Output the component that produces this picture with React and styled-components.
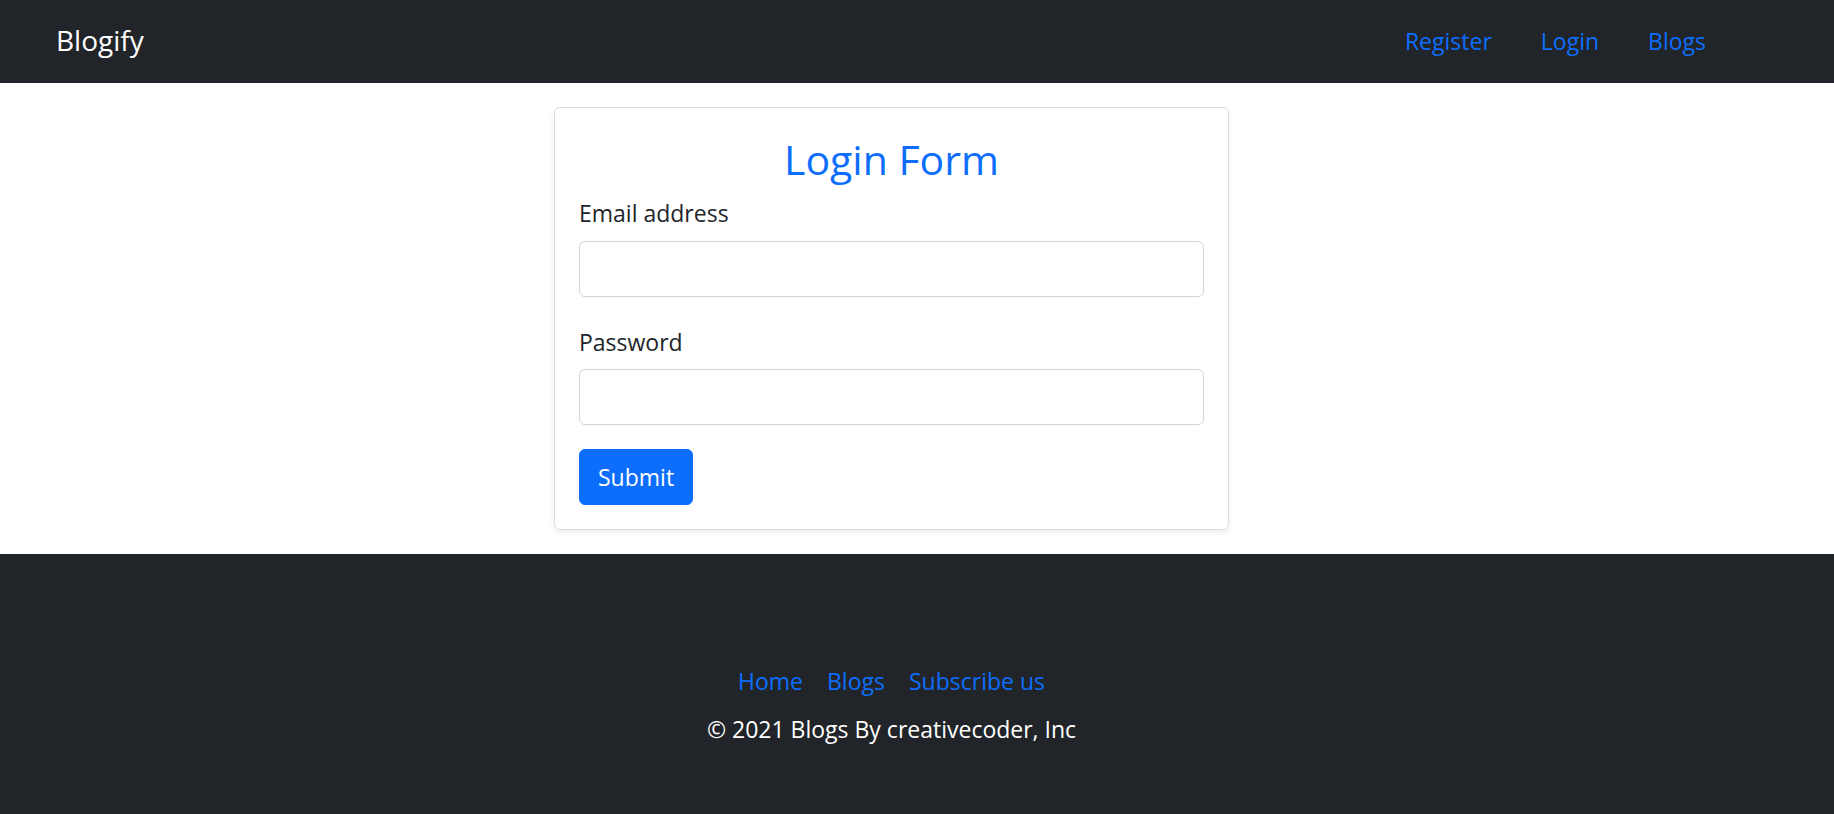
import styled, { createGlobalStyle } from "styled-components"

const GlobalStyle = createGlobalStyle`
  *, *::before, *::after { box-sizing: border-box; }

  html, body {
    margin: 0;
    padding: 0;
    background: #ffffff;
  }

  body {
    font-family: "Open Sans", "Noto Sans", "Liberation Sans", sans-serif;
    font-size: 23px;
    line-height: 1.5;
    color: #212529;
  }
`

const Navbar = styled.nav`
  height: 83px;
  background: #212529;
  display: flex;
  align-items: center;
  justify-content: space-between;
  padding: 0 128px 0 56px;
`

const Brand = styled.a`
  color: #ffffff;
  font-size: 28px;
  text-decoration: none;
  line-height: 1;
  padding-bottom: 4px;
`

const NavLinks = styled.ul`
  display: flex;
  gap: 49px;
  list-style: none;
  margin: 0;
  padding: 0;
`

const Link = styled.a`
  color: #0d6efd;
  text-decoration: none;
  font-size: 23px;
`

// content sits a little left of the page centre, as in the original layout
const Centered = styled.div`
  display: flex;
  flex-direction: column;
  align-items: center;
  padding-right: 51px;
`

const Main = styled(Centered)`
  padding-top: 24px;
  padding-bottom: 24px;
`

const Card = styled.form`
  width: 675px;
  padding: 27px 24px 24px;
  background: #ffffff;
  border: 1px solid #dcdcdc;
  border-radius: 6px;
  box-shadow: 0 3px 6px rgba(0, 0, 0, .075);
`

const Title = styled.h3`
  margin: 0 0 12px;
  font-size: 41px;
  font-weight: 500;
  line-height: 1.2;
  text-align: center;
  color: #0d6efd;
`

const Field = styled.div`
  margin-bottom: ${props => (props.$last ? "24px" : "28px")};
`

const Label = styled.label`
  display: block;
  margin-bottom: 10px;
`

const Input = styled.input`
  display: block;
  width: 100%;
  height: 56px;
  padding: 9px 18px;
  font: inherit;
  border: 1px solid #ced4da;
  border-radius: 6px;
  outline: none;
`

const Button = styled.button`
  display: block;
  height: 56px;
  padding: 0 18px;
  font: inherit;
  color: #ffffff;
  background: #0d6efd;
  border: 1px solid #0d6efd;
  border-radius: 6px;
  cursor: pointer;
`

const Footer = styled.footer`
  background: #212529;
  min-height: 280px;
  padding-top: 110px;
`

const FooterLinks = styled.div`
  display: flex;
  gap: 24px;
  margin-bottom: 13px;
`

const Copyright = styled.div`
  color: #ffffff;
`

const App = () => {

  return (
    <>
      <GlobalStyle />

      <Navbar>
        <Brand href="#">Blogify</Brand>
        <NavLinks>
          <li><Link href="#">Register</Link></li>
          <li><Link href="#">Login</Link></li>
          <li><Link href="#">Blogs</Link></li>
        </NavLinks>
      </Navbar>

      <Main>
        <Card onSubmit={e => e.preventDefault()}>
          <Title>Login Form</Title>
          <Field>
            <Label htmlFor="email">Email address</Label>
            <Input id="email" type="email" />
          </Field>
          <Field $last>
            <Label htmlFor="password">Password</Label>
            <Input id="password" type="password" />
          </Field>
          <Button type="submit">Submit</Button>
        </Card>
      </Main>

      <Footer>
        <Centered>
          <FooterLinks>
            <Link href="#">Home</Link>
            <Link href="#">Blogs</Link>
            <Link href="#">Subscribe us</Link>
          </FooterLinks>
          <Copyright>© 2021 Blogs By creativecoder, Inc</Copyright>
        </Centered>
      </Footer>
    </>
  )
}

export default App
